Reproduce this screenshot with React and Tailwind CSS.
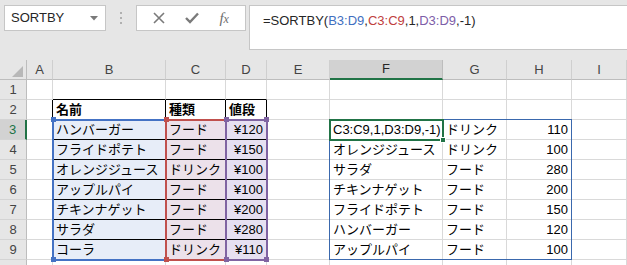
import React from 'react';

const COLS = ['A', 'B', 'C', 'D', 'E', 'F', 'G', 'H', 'I'];

const left = [
  ['ハンバーガー', 'フード', '¥120'],
  ['フライドポテト', 'フード', '¥150'],
  ['オレンジジュース', 'ドリンク', '¥100'],
  ['アップルパイ', 'フード', '¥100'],
  ['チキンナゲット', 'フード', '¥200'],
  ['サラダ', 'フード', '¥280'],
  ['コーラ', 'ドリンク', '¥110'],
];

const right = [
  ['C3:C9,1,D3:D9,-1)', 'ドリンク', '110'],
  ['オレンジジュース', 'ドリンク', '100'],
  ['サラダ', 'フード', '280'],
  ['チキンナゲット', 'フード', '200'],
  ['フライドポテト', 'フード', '150'],
  ['ハンバーガー', 'フード', '120'],
  ['アップルパイ', 'フード', '100'],
];

function cellText(col, row) {
  if (row === 2) {
    if (col === 'B') return '名前';
    if (col === 'C') return '種類';
    if (col === 'D') return '値段';
  }
  if (row >= 3 && row <= 9) {
    const i = row - 3;
    if (col === 'B') return left[i][0];
    if (col === 'C') return left[i][1];
    if (col === 'D') return left[i][2];
    if (col === 'F') return right[i][0];
    if (col === 'G') return right[i][1];
    if (col === 'H') return right[i][2];
  }
  return '';
}

function Cell({ col, row }) {
  const inTable = ['B', 'C', 'D'].includes(col) && row >= 2 && row <= 9;
  const aboveTable = ['B', 'C', 'D'].includes(col) && row === 1;
  const leftOfTable = col === 'A' && row >= 2 && row <= 9;

  const borderR = inTable || leftOfTable ? 'border-r-black' : 'border-r-[#d9d9d9]';
  const borderB = inTable || aboveTable ? 'border-b-black' : 'border-b-[#d9d9d9]';

  let bg = 'bg-white';
  if (row >= 3 && row <= 9) {
    if (col === 'B') bg = 'bg-[#e7edf8]';
    if (col === 'C') bg = 'bg-[#ece1ea]';
    if (col === 'D') bg = 'bg-[#e6e0f1]';
  }

  const alignRight = (col === 'D' || col === 'H') && row >= 3;
  const bold = row === 2 && inTable;

  return (
    <div
      className={`h-5 border-r border-b ${borderR} ${borderB} ${bg} flex items-center overflow-hidden whitespace-nowrap px-[3px] text-[13px] leading-none text-black ${
        alignRight ? 'justify-end' : 'justify-start'
      } ${bold ? 'font-bold' : ''}`}
    >
      {cellText(col, row)}
    </div>
  );
}

// coloured box drawn over a formula's range, with handles at the corners
function RangeBox({ className, handle, handles }) {
  return (
    <div className={`absolute border-2 pointer-events-none ${className}`}>
      {handles.includes('tl') && <span className={`absolute -left-[3px] -top-[4px] w-[5px] h-[5px] ${handle}`} />}
      {handles.includes('tr') && <span className={`absolute -right-[3px] -top-[4px] w-[5px] h-[5px] ${handle}`} />}
      {handles.includes('bl') && <span className={`absolute -left-[3px] -bottom-[3px] w-[5px] h-[5px] ${handle}`} />}
      {handles.includes('br') && <span className={`absolute -right-[3px] -bottom-[3px] w-[5px] h-[5px] ${handle}`} />}
    </div>
  );
}

export default function App() {
  const rows = [1, 2, 3, 4, 5, 6, 7, 8, 9, 10];

  return (
    <div
      className="w-[627px] h-[265px] overflow-hidden bg-[#e6e6e6]"
      style={{ fontFamily: '"Liberation Sans", "Noto Sans CJK JP", sans-serif' }}
    >
      {/* Formula bar */}
      <div className="h-[60px] flex items-start pt-[5px] pl-[4px]">
        <div className="w-[102px] h-[26px] bg-white border border-[#c6c6c6] flex items-center justify-between pl-[6px] pr-[7px]">
          <span className="text-[13px] text-[#262626]">SORTBY</span>
          <svg width="8" height="5" viewBox="0 0 8 5">
            <path d="M0 0 L8 0 L4 4.5 Z" fill="#7a7a7a" />
          </svg>
        </div>
        <div className="w-[30px] h-[26px] flex flex-col items-center justify-center gap-[3px]">
          <span className="w-[2px] h-[2px] bg-[#b0b0b0]" />
          <span className="w-[2px] h-[2px] bg-[#b0b0b0]" />
          <span className="w-[2px] h-[2px] bg-[#b0b0b0]" />
        </div>
        <div className="w-[110px] h-[26px] bg-white border border-[#c6c6c6] flex items-center justify-around px-[6px]">
          <svg width="12" height="12" viewBox="0 0 12 12">
            <path d="M1 1 L11 11 M11 1 L1 11" stroke="#7a7a7a" strokeWidth="1.6" fill="none" />
          </svg>
          <svg width="14" height="12" viewBox="0 0 14 12">
            <path d="M1 6 L5 10 L13 1.5" stroke="#7a7a7a" strokeWidth="2.4" fill="none" />
          </svg>
          <span
            className="text-[15px] italic text-[#6e6e6e] leading-none"
            style={{ fontFamily: '"Liberation Serif", serif' }}
          >
            f<span className="text-[12px]">x</span>
          </span>
        </div>
        <div className="ml-[3px] flex-1 h-[45px] bg-white border border-r-0 border-[#c6c6c6] pl-[13px] pt-[5px] text-[13px] text-[#262626] whitespace-nowrap">
          =SORTBY(<span className="text-[#3f6fc0]">B3:D9</span>,
          <span className="text-[#c0403d]">C3:C9</span>,1,
          <span className="text-[#7d5da8]">D3:D9</span>,-1)
        </div>
      </div>

      {/* Sheet */}
      <div className="relative bg-white">
        <div className="grid grid-cols-[27px_26px_113px_60px_41px_63px_113px_64px_65px_55px]">
          {/* corner */}
          <div className="h-5 bg-[#e6e6e6] border-r border-b border-[#bdbdbd] flex items-end justify-end pr-[3px] pb-[2px]">
            <svg width="11" height="11" viewBox="0 0 11 11">
              <path d="M11 0 L11 11 L0 11 Z" fill="#b8b8b8" />
            </svg>
          </div>
          {COLS.map((c) => (
            <div
              key={c}
              className={`h-5 flex items-center justify-center text-[13px] border-r ${
                c === 'F'
                  ? 'bg-[#d2d2d2] border-r-[#bdbdbd] border-b-2 border-b-[#217346] text-[#262626]'
                  : 'bg-[#e6e6e6] border-r-[#cfcfcf] border-b border-b-[#bdbdbd] text-[#444]'
              }`}
            >
              {c}
            </div>
          ))}

          {rows.map((r) => (
            <React.Fragment key={r}>
              <div
                className={`h-5 flex items-center justify-center text-[13px] border-b border-b-[#d4d4d4] ${
                  r === 3
                    ? 'bg-[#d2d2d2] border-r-2 border-r-[#217346] text-[#217346]'
                    : 'bg-[#e6e6e6] border-r border-r-[#bdbdbd] text-[#444]'
                }`}
              >
                {r < 10 ? r : ''}
              </div>
              {COLS.map((c) => (
                <Cell key={c} col={c} row={r} />
              ))}
            </React.Fragment>
          ))}
        </div>

        {/* spill range */}
        <div className="absolute left-[329px] top-[59px] w-[243px] h-[141px] border border-[#3a68ad] pointer-events-none" />

        {/* formula range highlights */}
        <RangeBox
          className="left-[52px] top-[59px] w-[216px] h-[142px] border-[#4472c4]"
          handle="bg-[#4472c4]"
          handles={['tl', 'bl']}
        />
        <RangeBox
          className="left-[165px] top-[59px] w-[62px] h-[142px] border-[#c0504d]"
          handle="bg-[#c0504d]"
          handles={['tl', 'bl']}
        />
        <RangeBox
          className="left-[225px] top-[59px] w-[43px] h-[142px] border-[#8064a2]"
          handle="bg-[#8064a2]"
          handles={['tl', 'tr', 'bl', 'br']}
        />

        {/* active cell F3 */}
        <div className="absolute left-[329px] top-[59px] w-[115px] h-[22px] border-2 border-[#217346] pointer-events-none">
          <span className="absolute -right-[4px] -bottom-[4px] w-[6px] h-[6px] bg-[#217346] border border-white" />
        </div>
      </div>
    </div>
  );
}
